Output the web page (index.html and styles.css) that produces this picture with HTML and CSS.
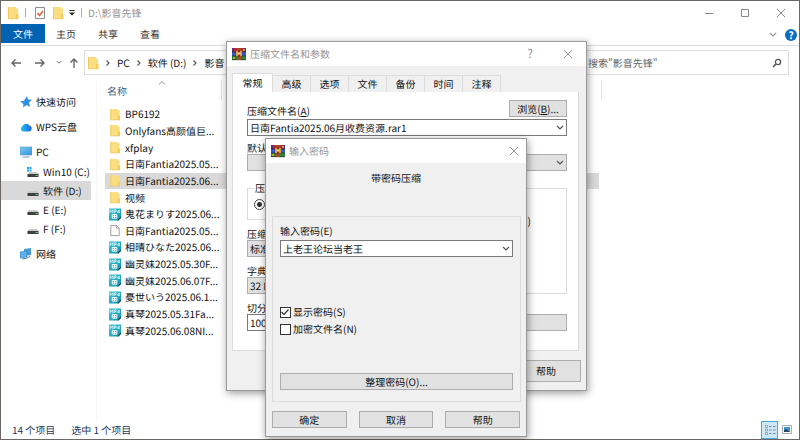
FILE: index.html
```html
<!DOCTYPE html>
<html lang="zh-CN">
<head>
<meta charset="utf-8">
<title>D:\影音先锋</title>
<link rel="stylesheet" href="styles.css">
</head>
<body>
<svg class="defs" aria-hidden="true">
  <defs>
    <linearGradient id="gf" x1="0" x2="1"><stop offset="0" stop-color="#fbe08a"/><stop offset="1" stop-color="#fbdc78"/></linearGradient>
    <linearGradient id="gm" x1="0" y1="0" x2="1" y2="1"><stop offset="0" stop-color="#3fc8d8"/><stop offset="1" stop-color="#0d8fa6"/></linearGradient>
    <linearGradient id="gp" x1="0" y1="0" x2="1" y2="1"><stop offset="0" stop-color="#7cc8f4"/><stop offset="1" stop-color="#2f96dc"/></linearGradient>
    <linearGradient id="gc" x1="0" x2="1"><stop offset="0" stop-color="#20c4ee"/><stop offset="1" stop-color="#1b62e8"/></linearGradient>
    <symbol id="folder" viewBox="0 0 12 14"><path d="M1 1h8v1.500h2V13H1z" fill="url(#gf)"/><path d="M1 1h1v12H1z" fill="#f1c85c"/><path d="M9 8h2.500v5H9z" fill="#f6cc5c"/><path d="M1 12.500h10v.7H1z" fill="#e9c465"/></symbol>
    <symbol id="mp4" viewBox="0 0 13 13"><path d="M0 0h13v10l-3 3H0z" fill="url(#gm)"/><path d="M1.200 5V1.500l1.500 2 1.500-2V5M5.700 5V1.500h2v2h-2M11 5V1.500L9 4h2.800" fill="none" stroke="#dff8fb" stroke-width=".9"/><path d="M3.500 6.500h5v4h-5zM3.500 8.500h5M6 6.500v4" fill="none" stroke="#fff" stroke-width="1"/><path d="M9 12.800l4-4v1.500L10.300 13z" fill="#063e56"/></symbol>
    <symbol id="page" viewBox="0 0 12 14"><path d="M1.500 1.500h6l3 3v8h-9z" fill="#fff" stroke="#999"/><path d="M7.500 1.500v3h3" fill="none" stroke="#999"/></symbol>
    <symbol id="rar" viewBox="0 0 14 14"><path d="M0 1h14v4H0z" fill="#b8283c"/><path d="M0 1h2v4H0zM12 1h2v4h-2z" fill="#5a2c7c"/><path d="M0 5h14v4H0z" fill="#3159c8"/><path d="M0 9h14v4H0z" fill="#2c8c34"/><path d="M0 5h14M0 9h14M0 12.700h14" stroke="#30202c" stroke-width=".7"/><path d="M5 1h4v12H5z" fill="#a74b22"/><path d="M4 4h6v5H4z" fill="#d99a3a"/><path d="M6 3h2v7H6z" fill="#8d3420"/><path d="M5.500 5.500h3v2h-3z" fill="#f6dc94"/><path d="M1 10h2v2H1zM11 2h2v2h-2z" fill="#c79a3a"/></symbol>
    <symbol id="drive" viewBox="0 0 12 12"><path d="M2 6h8l1.500 2H.5z" fill="#c9c9c9"/><path d="M.5 8h11v3H.5z" fill="#3c403e"/><path d="M8.500 9h2v1h-2z" fill="#6fcf83"/></symbol>
    <symbol id="down" viewBox="0 0 8 6"><path d="M1 1l3 3 3-3" fill="none" stroke="currentColor" stroke-width="1.200"/></symbol>
    <symbol id="right" viewBox="0 0 6 8"><path d="M1.500 1.500L4 4 1.500 6.500" fill="none" stroke="currentColor" stroke-width="1.100"/></symbol>
    <symbol id="close" viewBox="0 0 10 10"><path d="M1 1l8 8M9 1l-8 8" fill="none" stroke="currentColor"/></symbol>
  </defs>
</svg>

<main class="explorer">
  <header class="titlebar">
    <svg class="i-folder"><use href="#folder"/></svg>
    <span class="sep"></span>
    <svg class="i-folder" viewBox="0 0 12 14"><path d="M1.500 1.500h9v11h-9z" fill="#fff" stroke="#8c8c8c"/><path d="M3.500 7l2 2.500L9 5" fill="none" stroke="#e0603a" stroke-width="1.500"/></svg>
    <svg class="i-folder"><use href="#folder"/></svg>
    <svg class="i-small" viewBox="0 0 8 8"><path d="M1.500 1.500h5" stroke="#222"/><path d="M1 3.500h6L4 6.500z" fill="#222"/></svg>
    <span class="sep"></span>
    <h1>D:\影音先锋</h1>
    <div class="win-buttons">
      <button type="button" aria-label="最小化"><svg viewBox="0 0 10 10"><path d="M1 5.500h8" stroke="currentColor"/></svg></button>
      <button type="button" aria-label="最大化"><svg viewBox="0 0 10 10"><path d="M1.500 1.500h7v7h-7z" fill="none" stroke="currentColor"/></svg></button>
      <button type="button" aria-label="关闭"><svg><use href="#close"/></svg></button>
    </div>
  </header>
  <nav class="ribbon">
    <a class="file" href="#file">文件</a><a href="#home">主页</a><a href="#share">共享</a><a href="#view">查看</a>
    <div class="ribbon-end">
      <svg class="i-chev"><use href="#down"/></svg>
      <button type="button" class="help">?</button>
    </div>
  </nav>
  <div class="address-row">
    <div class="arrows">
      <svg viewBox="0 0 12 12"><path d="M11 6H2M5.500 2.500L2 6l3.500 3.500" fill="none" stroke="currentColor" stroke-width="1.400"/></svg>
      <svg viewBox="0 0 12 12"><path d="M1 6h9M6.500 2.500L10 6 6.500 9.500" fill="none" stroke="currentColor" stroke-width="1.400"/></svg>
      <svg class="i-tiny"><use href="#down"/></svg>
      <svg viewBox="0 0 12 12"><path d="M6 11V2M2.500 5.500L6 2l3.500 3.500" fill="none" stroke="currentColor" stroke-width="1.400"/></svg>
    </div>
    <div class="crumbs">
      <svg class="i-folder"><use href="#folder"/></svg>
      <svg class="i-right"><use href="#right"/></svg><a href="#pc">PC</a>
      <svg class="i-right"><use href="#right"/></svg><a href="#d">软件 (D:)</a>
      <svg class="i-right"><use href="#right"/></svg><a href="#dir">影音</a>
    </div>
    <label class="search"><input type="text" placeholder="搜索&quot;影音先锋&quot;" aria-label="搜索"><svg viewBox="0 0 10 10"><circle cx="6" cy="4" r="2.600" fill="none" stroke="currentColor" stroke-width="1.300"/><path d="M4 6L1 9" stroke="currentColor" stroke-width="1.600"/></svg></label>
  </div>

  <div class="content">
    <nav class="tree">
      <a class="top" href="#quick"><svg viewBox="0 0 12 12"><path d="M7 0l1 3.600 4 .2-3 2.700 1 4.500-3.500-2L3 11.500 3.500 8 0 5.500l4-.8z" fill="#2f8fe0"/></svg>快速访问</a>
      <a class="top" href="#wps"><svg viewBox="0 0 12 12"><path d="M3 10.500a3 3 0 0 1-.5-5.500 4 4 0 0 1 7-.5 3.100 3.100 0 0 1-.2 6z" fill="url(#gc)"/></svg>WPS云盘</a>
      <a class="top" href="#pc"><svg viewBox="0 0 12 12"><path d="M0 1h12v8H0z" fill="url(#gp)"/><path d="M0 1h12v8H0z" fill="none" stroke="#5795bd" stroke-width=".6"/><path d="M2.500 11h7" stroke="#7198b3"/></svg>PC</a>
      <a href="#c"><svg viewBox="0 0 12 12"><use href="#drive" width="12" height="12"/><path d="M0 1h2v2H0zM2.500 1h2v2h-2zM0 3.500h2v2H0zM2.500 3.500h2v2h-2z" fill="#19a8ee"/></svg>Win10 (C:)</a>
      <a class="on" href="#d"><svg><use href="#drive"/></svg>软件 (D:)</a>
      <a href="#e"><svg><use href="#drive"/></svg>E (E:)</a>
      <a href="#f"><svg><use href="#drive"/></svg>F (F:)</a>
      <a class="top" href="#net"><svg viewBox="0 0 12 12"><path d="M4 1l7-1v7l-7 1z" fill="#4c9bd4"/><path d="M0 4l7-1v6l-7 1z" fill="#59b4ee" stroke="#2f7cb8" stroke-width=".6"/><path d="M2 11l5-1 3-2" fill="none" stroke="#4c88b4"/></svg>网络</a>
    </nav>
    <section class="files">
      <div class="head"><svg class="sort" viewBox="0 0 8 6"><path d="M1 4.500l3-3 3 3" fill="none" stroke="#888"/></svg><span>名称</span></div>
      <ul>
        <li><svg><use href="#folder"/></svg>BP6192</li>
        <li><svg><use href="#folder"/></svg>Onlyfans高颜值巨...</li>
        <li><svg><use href="#folder"/></svg>xfplay</li>
        <li><svg><use href="#folder"/></svg>日南Fantia2025.05...</li>
        <li class="on"><svg><use href="#folder"/></svg>日南Fantia2025.06...</li>
        <li><svg><use href="#folder"/></svg>视频</li>
        <li><svg><use href="#mp4"/></svg>鬼花まりす2025.06...</li>
        <li><svg><use href="#page"/></svg>日南Fantia2025.05...</li>
        <li><svg><use href="#mp4"/></svg>相晴ひなた2025.06...</li>
        <li><svg><use href="#mp4"/></svg>幽灵妹2025.05.30F...</li>
        <li><svg><use href="#mp4"/></svg>幽灵妹2025.06.07F...</li>
        <li><svg><use href="#mp4"/></svg>憂世いう2025.06.1...</li>
        <li><svg><use href="#mp4"/></svg>真琴2025.05.31Fa...</li>
        <li><svg><use href="#mp4"/></svg>真琴2025.06.08NI...</li>
      </ul>
    </section>
    <aside class="preview"></aside>
  </div>

  <footer class="status">
    <span>14 个项目</span><span>选中 1 个项目</span>
    <div class="views">
      <button type="button" class="on" aria-label="详细信息"><svg viewBox="0 0 12 12"><path d="M1.500 1.500h2v2h-2zM1.500 5h2v2h-2zM1.500 8.500h2v2h-2z" fill="#fff" stroke="#8a9299" stroke-width=".8"/><path d="M5 2.500h2.500M9 2.500h2.500M5 6h2.500M9 6h2.500M5 9.500h2.500M9 9.500h2.500" stroke="#7e8a92"/></svg></button>
      <button type="button" aria-label="大图标"><svg viewBox="0 0 12 12"><path d="M1.500 1.500h9v8h-9z" fill="#fff" stroke="#a3adb5"/><path d="M3 3h6v5H3z" fill="#3f94cd"/><path d="M3 6l2-1 4 3H3z" fill="#29485e"/></svg></button>
    </div>
  </footer>
</main>

<section class="dialog archive" role="dialog" aria-labelledby="t1">
  <header><svg class="i-rar"><use href="#rar"/></svg><h2 id="t1">压缩文件名和参数</h2><span class="q">?</span><button type="button" class="x" aria-label="关闭"><svg><use href="#close"/></svg></button></header>
  <div class="tabs" role="tablist">
    <button type="button" role="tab" class="on" aria-selected="true">常规</button><button type="button" role="tab">高级</button><button type="button" role="tab">选项</button><button type="button" role="tab">文件</button><button type="button" role="tab">备份</button><button type="button" role="tab">时间</button><button type="button" role="tab">注释</button>
  </div>
  <div class="panel">
    <div class="row top-row"><label for="name">压缩文件名(<u>A</u>)</label><button type="button" class="btn browse">浏览(<u>B</u>)...</button></div>
    <div class="combo"><input id="name" type="text" value="日南Fantia2025.06月收费资源.rar1"><svg><use href="#down"/></svg></div>
    <label class="gap" for="profile">默认</label>
    <div class="row"><button type="button" class="btn third" aria-label="配置"></button><div class="combo gray grow"><select id="profile" aria-label="更新方式"><option></option></select><svg><use href="#down"/></svg></div></div>
    <div class="columns">
      <div class="left">
        <fieldset class="format"><legend>压缩</legend><input type="radio" checked aria-label="RAR"></fieldset>
        <label class="gap" for="method">压缩</label>
        <div class="combo gray"><select id="method"><option>标准</option></select></div>
        <label class="gap" for="dict">字典</label>
        <div class="combo gray"><select id="dict"><option>32 MB</option></select></div>
      </div>
      <fieldset class="options"><span>)</span></fieldset>
    </div>
    <label class="gap wide" for="split">切分</label>
    <div class="row"><div class="combo third"><input id="split" type="text" value="1000"></div><button type="button" class="btn grow" aria-label="选项"></button></div>
  </div>
  <footer><button type="button" class="btn">帮助</button></footer>
</section>

<section class="dialog password" role="dialog" aria-labelledby="t2">
  <header><svg class="i-rar"><use href="#rar"/></svg><h2 id="t2">输入密码</h2><button type="button" class="x" aria-label="关闭"><svg><use href="#close"/></svg></button></header>
  <p>带密码压缩</p>
  <div class="group">
    <label for="pw">输入密码(E)</label>
    <div class="combo"><input id="pw" type="text" value="上老王论坛当老王"><svg><use href="#down"/></svg></div>
    <div class="checks">
      <label><input type="checkbox" checked>显示密码(S)<svg class="tick" viewBox="0 0 10 10"><path d="M1.500 5l2.500 2.500L8.500 2.500" fill="none" stroke="#333" stroke-width="1.200"/></svg></label>
      <label><input type="checkbox">加密文件名(N)</label>
    </div>
    <button type="button" class="btn">整理密码(O)...</button>
  </div>
  <footer><button type="button" class="btn">确定</button><button type="button" class="btn">取消</button><button type="button" class="btn">帮助</button></footer>
</section>
</body>
</html>
```

FILE: styles.css
```css
* { box-sizing: border-box; margin: 0; padding: 0; }
body {
  display: grid;
  min-height: 100vh;
  padding: 1px;
  background: #6b6764;
  color: #111;
  font: 10px/12px "Noto Sans CJK SC", "Noto Sans", sans-serif;
  text-rendering: geometricPrecision;
}
button, input, select { font: inherit; color: inherit; border-radius: 0; text-rendering: inherit; }
button { border: 0; background: none; }
h1, h2 { font-size: 10px; font-weight: 400; color: #959595; }
a { color: inherit; text-decoration: none; }
svg { flex: none; display: block; }
.defs { position: absolute; width: 0; height: 0; }

.i-folder { width: 12px; height: 14px; }
.i-small { width: 8px; height: 8px; }
.i-rar { width: 14px; height: 14px; }
.i-chev { width: 8px; height: 6px; color: #999; }
.i-right { width: 6px; height: 8px; color: #555; }

/* Explorer window */
.explorer { display: flex; flex-direction: column; background: #fff; }
.titlebar { display: flex; align-items: center; height: 23px; padding: 0 10px 0 6px; }
.sep { width: 1px; height: 9px; background: #aaa; }
.titlebar .sep { margin: 0 8px 0 6px; }
.titlebar .i-folder + .i-folder { margin: 0 4px 0 6px; }
.titlebar .i-small + .sep { margin: 0 6px 0 5px; }
.win-buttons { display: flex; gap: 26px; margin-left: auto; padding-right: 3px; color: #888; }
.win-buttons button { width: 10px; height: 10px; }
.win-buttons svg { width: 10px; height: 10px; }

.ribbon { display: flex; height: 22px; border-bottom: 1px solid #dcdcdc; }
.ribbon a { width: 42px; padding-top: 4px; height: 19px; text-align: center; color: #333; }
.ribbon .file { width: 44px; background: #0063b1; color: #fff; }
.ribbon-end { display: flex; align-items: center; gap: 8px; margin-left: auto; padding-right: 2px; }
.help { width: 12px; height: 12px; border-radius: 50%; background: #0a6cc4; color: #fff; font-weight: 700; line-height: 12px; }

.address-row { display: flex; gap: 4px; height: 34px; padding: 4px 10px 5px 9px; }
.arrows { display: flex; align-items: center; gap: 12px; color: #666; }
.arrows svg { width: 12px; height: 12px; }
.arrows .i-tiny { width: 6px; height: 5px; margin: 0 -6px 0 -2px; }
.crumbs { display: flex; flex: 1; align-items: center; gap: 6px; padding-left: 2px; border: 1px solid #dedede; }
.search { display: flex; align-items: center; width: 208px; padding: 0 6px; border: 1px solid #dedede; }
.search input { flex: 1; min-width: 0; border: 0; outline: 0; background: none; }
.search input::placeholder { color: #666; opacity: 1; }
.search svg { width: 10px; height: 10px; color: #555; }

.content { display: flex; flex: 1; }
.tree { display: flex; flex-direction: column; width: 96px; padding-top: 12px; border-right: 1px solid #f6f6f6; }
.tree a { display: flex; align-items: center; gap: 4px; width: 90px; height: 19px; padding-left: 26px; white-space: nowrap; }
.tree svg { width: 12px; height: 12px; }
.tree .top { height: 20px; padding-left: 19px; }
.tree .top:nth-child(2) { height: 30px; }
.tree .top:last-child { height: 32px; }
.tree .on, .files .on { background: #d9d9d9; }

.files { flex: 1; margin-right: 2px; padding-left: 8px; }
.head { position: relative; width: 117px; height: 20px; padding: 5px 0 0 2px; border-right: 1px solid #e4e4e4; color: #4c607a; }
.sort { position: absolute; left: 53px; top: 0; width: 8px; height: 6px; }
.files ul { display: grid; grid-auto-rows: 1fr; height: 233px; margin-top: 6px; list-style: none; }
.files li { display: flex; align-items: center; gap: 4px; padding-left: 4px; white-space: nowrap; }
.files li svg { width: 12px; height: 13px; }
.preview { width: 198px; height: 20px; border-left: 1px solid #e4e4e4; }

.status { display: flex; align-items: center; gap: 16px; height: 19px; padding: 0 4px 0 11px; color: #1e395b; }
.views { display: flex; margin-left: auto; }
.views button { display: grid; place-items: center; width: 17px; height: 18px; }
.views svg { width: 12px; height: 12px; }
.views .on { border: 1px solid #4aa8d4; background: #cbe8f6; }

/* Dialogs */
.dialog { position: absolute; background: #f0f0f0; border: 1px solid #999; box-shadow: 1px 2px 8px rgba(0, 0, 0, .4); }
.dialog header { display: flex; align-items: center; gap: 4px; height: 24px; padding: 0 7px 0 5px; background: #fff; }
.x { width: 10px; height: 10px; margin-left: auto; color: #999; }
.x svg { width: 10px; height: 10px; }
.q { margin-left: auto; font-size: 12px; color: #999; }
.q + .x { margin-left: 26px; }
.btn { height: 17px; border: 1px solid #adadad; background: #e1e1e1; }
.dialog label { display: block; }
.row { display: flex; }
.grow { flex: 1; }
.third { width: 120px; }
.dialog .gap { padding-top: 6px; }
.columns .gap, .dialog .wide { padding-top: 8px; }
.combo { position: relative; height: 17px; border: 1px solid #7a7a7a; background: #fff; }
.combo input, .combo select { display: block; width: 100%; height: 15px; padding: 0 2px; border: 0; outline: 0; background: none; appearance: none; }
.combo svg { position: absolute; right: 2px; top: 5px; width: 8px; height: 6px; color: #555; }
.gray { background: #e1e1e1; border-color: #adadad; }

.archive { left: 226px; top: 41px; width: 361px; }
.archive header { padding-right: 13px; }
.tabs { display: flex; align-items: flex-end; padding: 7px 5px 0; }
.tabs button { width: 38px; height: 17px; border: 1px solid #dcdcdc; border-width: 1px 1px 0 0; }
.tabs .on { width: 41px; height: 19px; border-left-width: 1px; background: #fff; }
.panel { margin: 0 7px 0 5px; padding: 8px 11px 19px 14px; border: 1px solid #dcdcdc; border-top: 0; background: #fff; }
.top-row { justify-content: space-between; align-items: flex-end; margin-bottom: 2px; }
.browse { width: 58px; }
.columns { display: flex; gap: 12px; padding-top: 11px; }
.left { width: 140px; }
fieldset { border: 1px solid #dcdcdc; min-width: 0; }
.format { height: 38px; padding: 5px 6px; }
.format legend { padding: 0 1px; }
.format input { appearance: none; display: block; width: 11px; height: 11px; border: 1px solid #444; border-radius: 50%; background: radial-gradient(circle, #333 0 2px, #fff 3px); }
.options { flex: 1; margin-top: 6px; padding: 26px 35px 0 0; text-align: right; }
.archive footer { display: flex; justify-content: flex-end; padding: 9px 5px 8px; }
.archive footer .btn { width: 70px; height: 22px; }

.password { left: 265px; top: 138px; width: 262px; }
.password p { padding: 9px 0 0; text-align: center; }
.password .group { margin: 32px 5px 0 6px; padding: 8px 7px 11px; border: 1px solid #dcdcdc; }
.group .combo { margin-top: 3px; }
.checks { display: grid; gap: 5px; padding: 49px 0 38px; }
.checks label { position: relative; display: flex; align-items: center; gap: 2px; }
.checks input { appearance: none; width: 11px; height: 11px; border: 1px solid #333; background: #fff; }
.tick { position: absolute; left: 0; top: 1px; width: 10px; height: 10px; }
.group .btn { display: block; width: 100%; }
.password footer { display: flex; gap: 12px; padding: 9px 6px 8px; }
.password footer .btn { flex: 1; }
```
